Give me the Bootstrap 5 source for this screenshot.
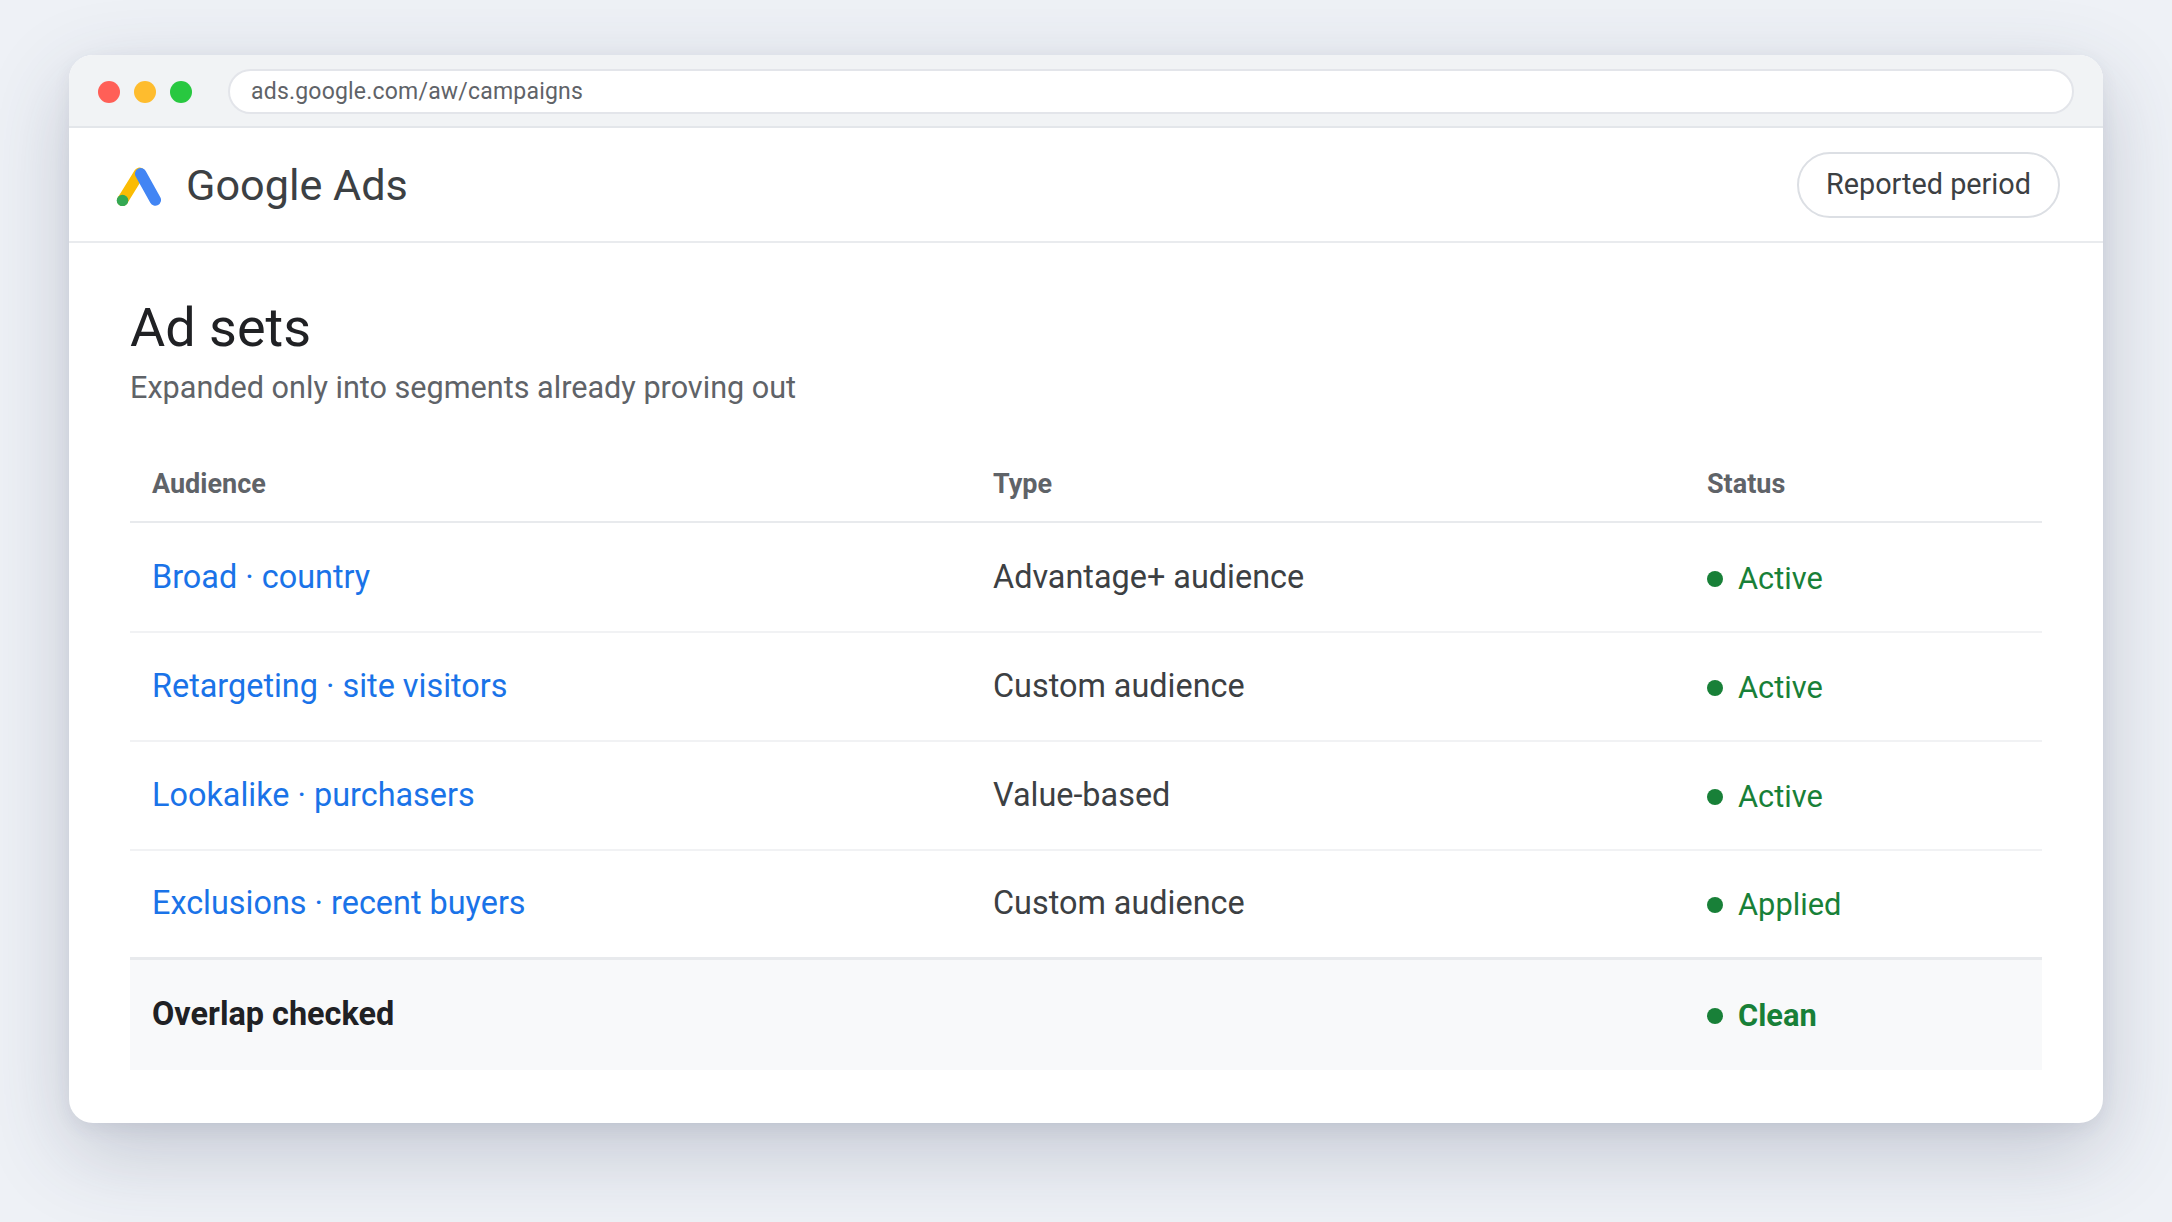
<!DOCTYPE html>
<html lang="en">
<head>
<meta charset="utf-8">
<title>Google Ads</title>
<link href="https://cdn.jsdelivr.net/npm/bootstrap@5.3.0/dist/css/bootstrap.min.css" rel="stylesheet">
<style>
html,body{height:100%}
body{background:#eef1f6;font-family:Roboto,"Liberation Sans",sans-serif;color:#3c4043;overflow:hidden;padding:55px 69px 0}
.win{height:1068px;background:#fff;border-radius:24px;overflow:hidden;box-shadow:0 28px 84px rgba(50,60,90,.23),0 6px 18px rgba(50,60,90,.07)}
.chrome{height:73px;background:#f1f3f5;border-bottom:2px solid #e3e6ea;padding:14px 29px 0 29px;gap:36px}
.dot{width:22px;height:22px;border-radius:50%}
.dots{gap:14px;padding-top:12px}
.url{flex:1;height:45px;background:#fff;border:2px solid #e3e5ea;border-radius:23px;padding:0 21px;font-size:23px;line-height:42px;color:#5f6368;letter-spacing:.2px}
.bar{height:115px;border-bottom:2px solid #e9ebee;padding:0 43px 0 47px}
.logo{width:46px;height:42px}
.brand{font-size:43.2px;color:#3c4043;margin-left:24px;line-height:1;padding-top:2px}
.pill{height:66px;padding:0 27px;border:2px solid #dcdfe4;border-radius:33px;background:#fff;font-size:28.8px;color:#3c4043}
.main{padding:50px 61px 0}
h1{font-size:54px;font-weight:400;color:#202124;line-height:66px;margin:2px 0 0}
.sub{font-size:30.6px;color:#5f6368;line-height:40px;margin:7px 0 0}
table.tbl{margin:41px 0 0;table-layout:fixed;width:100%;--bs-table-color:#3c4043;--bs-table-border-color:#f1f2f4;font-size:32.4px}
.tbl th{font-size:27px;font-weight:700;color:#5f6368;height:73px;padding:0 22px 2px;border-bottom:2px solid #e8eaed;vertical-align:middle}
.tbl td{height:108.6px;padding:0 22px;border-bottom:2px solid #f1f2f4;vertical-align:middle}
.tbl tbody tr:first-child td{height:110.4px}
.tbl a{color:#1a73e8;text-decoration:none}
.tbl tr.last td{border-bottom:0}
.tbl tfoot td{height:111.500px;background:#f8f9fa;border-top:3px solid #e8eaed;border-bottom:0;--bs-table-bg:#f8f9fa;color:#202124;font-weight:700}
.st{color:#188038;gap:15px;padding-top:3px;font-size:30.8px}
.st i{width:16px;height:16px;border-radius:50%;background:#188038;display:block}
</style>
</head>
<body>
<div class="win d-flex flex-column">
  <div class="chrome d-flex align-items-start">
    <div class="dots d-flex">
      <span class="dot" style="background:#ff5f57"></span>
      <span class="dot" style="background:#febc2e"></span>
      <span class="dot" style="background:#28c840"></span>
    </div>
    <div class="url">ads.google.com/aw/campaigns</div>
  </div>
  <div class="bar d-flex align-items-center">
    <svg class="logo" viewBox="0 0 46 42" aria-hidden="true">
      <line x1="6.500" y1="36.500" x2="23.500" y2="9" stroke="#fbbc04" stroke-width="11" stroke-linecap="round"/>
      <line x1="24.700" y1="9.800" x2="39.300" y2="36" stroke="#4285f4" stroke-width="11.500" stroke-linecap="round"/>
      <circle cx="6.500" cy="36.500" r="5.800" fill="#34a853"/>
    </svg>
    <div class="brand">Google Ads</div>
    <button class="pill ms-auto" type="button">Reported period</button>
  </div>
  <div class="main">
    <h1>Ad sets</h1>
    <p class="sub">Expanded only into segments already proving out</p>
    <table class="table tbl">
      <colgroup><col style="width:841px"><col style="width:714px"><col></colgroup>
      <thead><tr><th>Audience</th><th>Type</th><th>Status</th></tr></thead>
      <tbody>
        <tr><td><a href="#">Broad · country</a></td><td>Advantage+ audience</td><td><div class="st d-flex align-items-center"><i></i>Active</div></td></tr>
        <tr><td><a href="#">Retargeting · site visitors</a></td><td>Custom audience</td><td><div class="st d-flex align-items-center"><i></i>Active</div></td></tr>
        <tr><td><a href="#">Lookalike · purchasers</a></td><td>Value-based</td><td><div class="st d-flex align-items-center"><i></i>Active</div></td></tr>
        <tr class="last"><td><a href="#">Exclusions · recent buyers</a></td><td>Custom audience</td><td><div class="st d-flex align-items-center"><i></i>Applied</div></td></tr>
      </tbody>
      <tfoot><tr><td>Overlap checked</td><td></td><td><div class="st d-flex align-items-center"><i></i>Clean</div></td></tr></tfoot>
    </table>
  </div>
</div>
<script src="https://cdn.jsdelivr.net/npm/bootstrap@5.3.0/dist/js/bootstrap.bundle.min.js"></script>
</body>
</html>
